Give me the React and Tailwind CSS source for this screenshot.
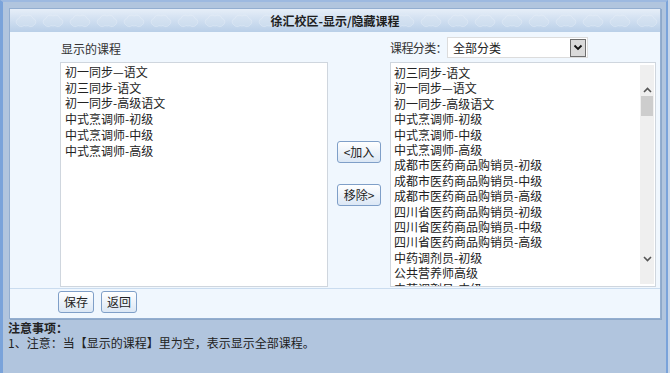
import React from 'react'

const shown = [
  '初一同步—语文',
  '初三同步-语文',
  '初一同步-高级语文',
  '中式烹调师-初级',
  '中式烹调师-中级',
  '中式烹调师-高级',
]

const all = [
  '初三同步-语文',
  '初一同步—语文',
  '初一同步-高级语文',
  '中式烹调师-初级',
  '中式烹调师-中级',
  '中式烹调师-高级',
  '成都市医药商品购销员-初级',
  '成都市医药商品购销员-中级',
  '成都市医药商品购销员-高级',
  '四川省医药商品购销员-初级',
  '四川省医药商品购销员-中级',
  '四川省医药商品购销员-高级',
  '中药调剂员-初级',
  '公共营养师高级',
  '中药调剂员-中级',
]

// 淡淡的云朵底纹
function Clouds() {
  return (
    <svg className="absolute inset-0 w-full h-full" aria-hidden="true">
      <defs>
        <pattern id="cloud" x="3" y="0" width="27" height="23" patternUnits="userSpaceOnUse">
          <path
            d="M5 16 a3.5 3.5 0 0 1 1-6.5 a4.5 4.5 0 0 1 7-2.5 a4.5 4.5 0 0 1 7 2.5 a3.5 3.5 0 0 1 1 6.5 a4 4 0 0 1 -6 0.5 a4.5 4.5 0 0 1 -4 0 a4 4 0 0 1 -6 -0.5 z"
            fill="#d6e3f1"
            stroke="#e9f0f8"
            strokeWidth="1"
          />
        </pattern>
      </defs>
      <rect width="100%" height="100%" fill="url(#cloud)" opacity="0.45" />
    </svg>
  )
}

function Btn({ children, className = '' }) {
  return (
    <button
      className={`h-[22px] rounded-[3px] border border-[#7f9fc8] bg-gradient-to-b from-white to-[#dbe7f5] text-[12px] leading-none text-[#222] ${className}`}
    >
      {children}
    </button>
  )
}

function Chevron({ up }) {
  return (
    <svg width="9" height="6" viewBox="0 0 9 6">
      <path
        d={up ? 'M1 5 L4.5 1.5 L8 5' : 'M1 1 L4.5 4.5 L8 1'}
        fill="none"
        stroke="#555"
        strokeWidth="1.6"
      />
    </svg>
  )
}

export default function App() {
  return (
    <div
      className="w-[670px] h-[373px] overflow-hidden bg-[#c8d7ea] text-[12px] text-[#222]"
      style={{ fontFamily: '"Noto Sans CJK SC", "Liberation Sans", sans-serif' }}
    >
      <div className="w-[668px] h-full bg-[#b1c5de] border-l-[3px] border-t-2 border-r-2 border-l-[#7aa3da] border-t-[#9db9e0] border-r-[#7aa3da]">
        {/* 主面板 */}
        <div className="ml-[6px] mt-[6px] w-[652px] border border-[#93aed0] bg-[#f0f7fe] shadow-[1px_1px_0_#8ea8c8]">
          {/* 标题栏 */}
          <div className="relative h-[23px] bg-gradient-to-b from-[#e6eef8] to-[#b9cfe8] flex items-center justify-center">
            <Clouds />
            <span className="relative font-bold leading-none text-[#1e1e1e]">徐汇校区-显示/隐藏课程</span>
          </div>

          {/* 内容 */}
          <div className="pl-[50px] border-b border-[#cadcef]">
            <div className="grid grid-cols-[268px_62px_266px]">
              <div className="h-[30px] flex items-end pb-[7px] pl-px leading-none text-[#333]">显示的课程</div>
              <div />
              <div className="h-[30px] flex items-end pb-[4px]">
                <span className="w-[57px] flex-none whitespace-nowrap tracking-[-0.6px] leading-[21px] text-[#333]">课程分类：</span>
                <div className="w-[141px] h-[21px] flex-none bg-white border border-[#dcdcdc] flex items-center justify-between pl-[5px] pr-px">
                  <span className="leading-none text-[#222]">全部分类</span>
                  <div className="w-[16px] h-[18px] bg-[#dadada] border border-[#6e6e6e] flex items-center justify-center">
                    <svg width="10" height="7" viewBox="0 0 10 7">
                      <path d="M1.5 1.5 L5 5 L8.5 1.5" fill="none" stroke="#111" strokeWidth="1.8" />
                    </svg>
                  </div>
                </div>
              </div>

              {/* 显示的课程列表 */}
              <div className="h-[225px] bg-white border border-[#cfd6de] pl-[4px] pt-[1px] overflow-hidden">
                {shown.map((s) => (
                  <div key={s} className="leading-[15.7px] text-[#222] whitespace-nowrap">{s}</div>
                ))}
              </div>

              {/* 中间按钮 */}
              <div className="flex flex-col items-start pt-[79px] gap-[21px] pl-[9px]">
                <Btn className="w-[44px]">&lt;加入</Btn>
                <Btn className="w-[44px]">移除&gt;</Btn>
              </div>

              {/* 全部课程列表 */}
              <div className="h-[225px] bg-white border border-[#cfd6de] flex overflow-hidden">
                <div className="flex-1 pl-[3px] pt-[2px] overflow-hidden">
                  {all.map((s) => (
                    <div key={s} className="leading-[15.4px] text-[#222] whitespace-nowrap">{s}</div>
                  ))}
                </div>
                <div className="w-[14px] my-[2px] mr-[1px] bg-[#efefef] flex flex-col items-center">
                  <div className="h-[30px] flex items-end justify-center pb-[2px]">
                    <Chevron up />
                  </div>
                  <div className="mt-[1px] w-[12px] h-[20px] bg-[#cdcdcd]" />
                  <div className="flex-1" />
                  <div className="h-[30px] flex items-start justify-center pt-[2px]">
                    <Chevron />
                  </div>
                </div>
              </div>
            </div>
            <div className="h-px" />
          </div>

          {/* 底部按钮 */}
          <div className="h-[29px] pl-[48px] pt-[2px] flex gap-[7px] items-start">
            <Btn className="w-[36px]">保存</Btn>
            <Btn className="w-[36px]">返回</Btn>
          </div>
        </div>

        {/* 注意事项 */}
        <div className="pl-[5px] pt-px leading-[15px]">
          <div className="font-bold">注意事项：</div>
          <div>1、注意：当【显示的课程】里为空，表示显示全部课程。</div>
        </div>
      </div>
    </div>
  )
}
